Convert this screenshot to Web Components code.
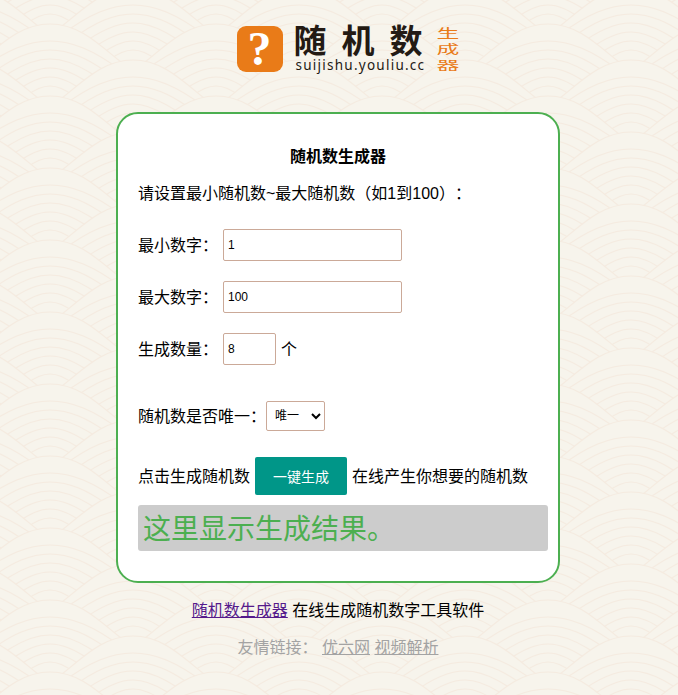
<!DOCTYPE html>
<html lang="zh-CN">
<head>
<meta charset="utf-8">
<title>随机数生成器</title>
<style>
html,body{margin:0;padding:0;height:100%}
body{background:#f6f3eb;font:16px/24px "Liberation Sans","Noto Sans CJK SC",sans-serif;color:#000;text-spacing-trim:space-all}
</style>
</head>
<body>
<rn-page>
  <rn-logo></rn-logo>
  <rn-card>
    <rn-generator></rn-generator>
  </rn-card>
  <rn-footer></rn-footer>
</rn-page>
<script>
const FONT='"Liberation Sans","Noto Sans CJK SC",sans-serif';
function scallops(){
  const W=166,H=72;let out='';
  const F='#f7f4ec',S='#f5ebe0';
  for(let r=-1;r<=6;r++){
    const top=-48+36*r, base=(r%2===0)?50:133;
    for(let k=-1;k<=1;k++){
      const c=base+k*W;
      out+=`<path fill="${F}" stroke="${S}" stroke-width="1.2" d="M${c-100} ${top+58} C${c-62} ${top+38} ${c-40} ${top} ${c} ${top} C${c+40} ${top} ${c+62} ${top+38} ${c+100} ${top+58} L${c+100} ${top+130} L${c-100} ${top+130}Z"/>`;
      const arcs=[[17,72],[26,62],[35,52],[44,42],[53,33],[62,24]];
      for(const [dy,hw] of arcs){
        const t=top+dy;
        out+=`<path fill="none" stroke="${S}" stroke-width="1.1" d="M${c-hw} ${t+hw*0.42} C${c-hw*0.6} ${t+hw*0.12} ${c-hw*0.3} ${t} ${c} ${t} C${c+hw*0.3} ${t} ${c+hw*0.6} ${t+hw*0.12} ${c+hw} ${t+hw*0.42}"/>`;
      }
    }
  }
  return `<pattern id="sea" patternUnits="userSpaceOnUse" width="${W}" height="${H}">${out}</pattern>`;
}
class Base extends HTMLElement{
  constructor(){super();this.attachShadow({mode:'open'}).innerHTML=this.constructor.html;}
}
class RnPage extends Base{
  static html=`<style>
  :host{display:block;position:relative;min-height:695px;overflow:hidden;box-sizing:border-box;padding:25px 2px 0 0}
  svg{position:absolute;inset:0;width:100%;height:100%;z-index:0}
  .c{position:relative;z-index:1;display:flex;flex-direction:column;align-items:center}
  </style><svg aria-hidden="true"><defs>${scallops()}</defs><rect width="100%" height="100%" fill="url(#sea)"/></svg><div class="c"><slot></slot></div>`;
}
class RnLogo extends Base{
  static html=`<style>
  :host{display:flex;width:223px;height:47px;gap:0;margin-bottom:40px;margin-left:20px;font-family:${FONT};color:#231a14;text-spacing-trim:space-all}
  .icon{flex:none;width:46px;height:46px;margin:1px 11px 0 0;border-radius:9px;background:#e97b18;color:#fff;display:flex;align-items:center;justify-content:center;font:700 48px/46px "Liberation Serif",serif}
  .words{flex:none;width:143px;display:flex;flex-direction:column}
  .cn{font-size:33px;line-height:33px;font-weight:700;letter-spacing:15px;white-space:nowrap;height:33px}
  .en{font-size:13.5px;line-height:14px;letter-spacing:1.25px;margin-left:2px;white-space:nowrap;font-family:"Noto Sans","Liberation Sans",sans-serif}
  .side{flex:none;width:23px;display:flex;flex-direction:column;align-items:center;gap:2px;color:#e97b18;font-size:12px;line-height:14px;padding-top:2px}
  .side span{display:block;transform:scale(1.9,1)}
  </style><div class="icon">?</div><div class="words"><div class="cn">随机数</div><div class="en">suijishu.youliu.cc</div></div><div class="side"><span>生</span><span>成</span><span>器</span></div>`;
}
class RnCard extends Base{
  static html=`<style>
  :host{display:block;box-sizing:border-box;width:444px;height:471px;background:#fff;border:2px solid #4caf50;border-radius:22px;padding:30px 10px 29px 20px}
  </style><slot></slot>`;
}
class RnGenerator extends Base{
  static html=`<style>
  :host{display:block;font:16px/24px ${FONT};text-spacing-trim:space-all}
  h1{margin:1px 0 13px;font-size:16px;line-height:24px;font-weight:700;text-align:center;padding-right:10px}
  p{margin:0 0 23px;white-space:nowrap}
  .row{display:flex;align-items:center;gap:5px;margin-bottom:20px;white-space:nowrap}
  .row span{padding-top:2px}
  input,select{box-sizing:border-box;border:1px solid #cba998;border-radius:2px;background:#fff;color:#000;font:12px ${FONT};margin:0;outline:0}
  input{height:32px;padding:0 4px;width:179px}
  input.n{width:53px}
  .sel{margin:36px 0 26px}
  select{width:59px;height:30px;padding:0 0 0 4px}
  button{box-sizing:border-box;width:92px;height:38px;border:0;border-radius:2px;background:#009688;color:#fff;font:14px ${FONT};padding:0}
  .btn{margin-bottom:10px}
  .result{box-sizing:border-box;height:46px;background:#ccc;border-radius:3px;padding:0 5px;color:#4caf50;font-size:28px;line-height:50px;white-space:nowrap}
  </style>
  <h1>随机数生成器</h1>
  <p>请设置最小随机数~最大随机数（如1到100）：</p>
  <div class="row"><span>最小数字：</span><input value="1"></div>
  <div class="row"><span>最大数字：</span><input value="100"></div>
  <div class="row" style="margin-bottom:0"><span>生成数量：</span><input class="n" value="8"><span>个</span></div>
  <div class="row sel" style="gap:0"><span>随机数是否唯一：</span><select><option>唯一</option><option>不唯一</option></select></div>
  <div class="row btn"><span>点击生成随机数</span><button>一键生成</button><span>在线产生你想要的随机数</span></div>
  <div class="result">这里显示生成结果。</div>`;
}
class RnFooter extends Base{
  static html=`<style>
  :host{display:block;text-align:center;font:16px/24px ${FONT};padding-top:16px;text-spacing-trim:space-all}
  p{margin:0;white-space:nowrap}
  .l{margin-top:13px;color:#a3a3a3}
  a{color:inherit}
  a.v{color:#551a8b}
  </style>
  <p><a class="v" href="#">随机数生成器</a> 在线生成随机数字工具软件</p>
  <p class="l">友情链接： <a href="#">优六网</a> <a href="#">视频解析</a></p>`;
}
customElements.define('rn-page',RnPage);
customElements.define('rn-logo',RnLogo);
customElements.define('rn-card',RnCard);
customElements.define('rn-generator',RnGenerator);
customElements.define('rn-footer',RnFooter);
</script>
</body>
</html>
